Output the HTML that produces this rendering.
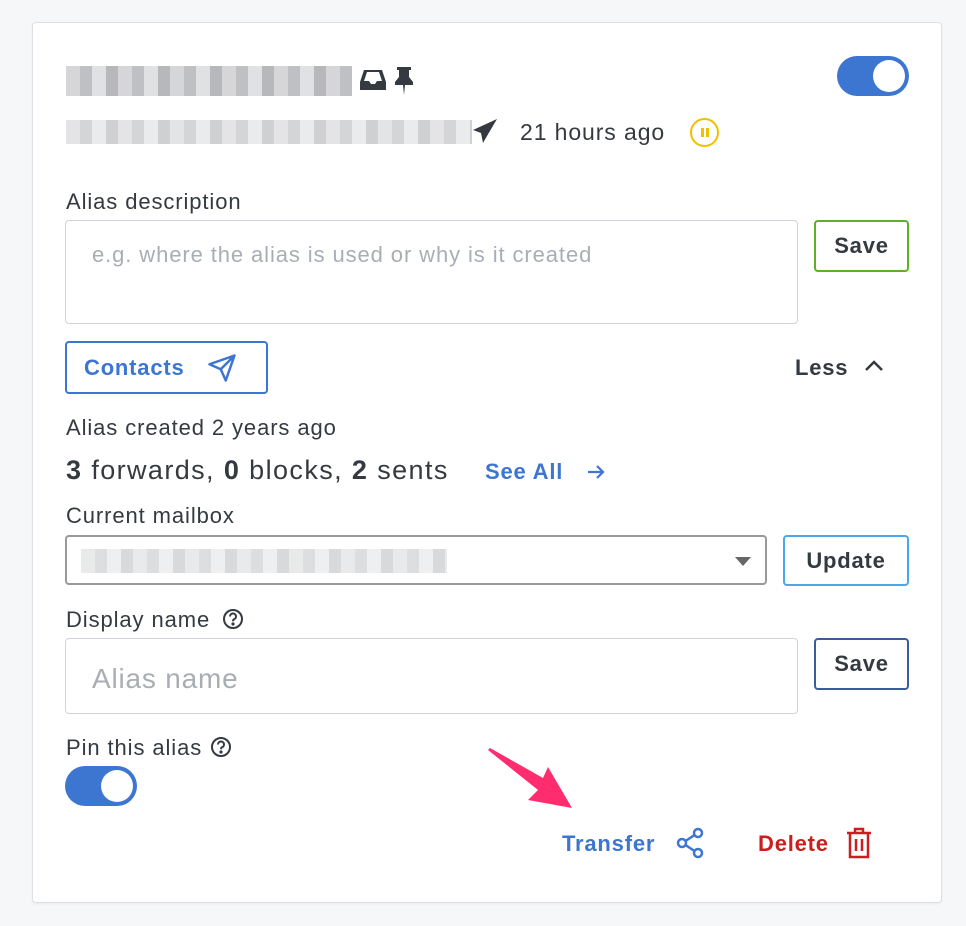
<!DOCTYPE html>
<html><head><meta charset="utf-8"><style>
body{margin:0;width:966px;height:926px;background:#f6f7f9;font-family:"Liberation Sans",sans-serif;position:relative;overflow:hidden}
.card{position:absolute;left:32px;top:22px;width:908px;height:879px;background:#fff;border:1px solid #dcdfe4;border-radius:4px;box-shadow:0 1px 2px rgba(0,0,0,.05)}
.a{position:absolute}
.t{color:#343a40;font-size:22px;letter-spacing:.9px}
.btn{position:absolute;border-radius:4px;font-weight:bold;font-size:22px;display:flex;align-items:center;justify-content:center;box-sizing:border-box;letter-spacing:.8px}
.inp{position:absolute;border:1px solid #ced4da;border-radius:4px;box-sizing:border-box;background:#fff}
.blur{position:absolute;background:repeating-linear-gradient(90deg,#c8c9cc 0 14px,#a9abaf 14px 26px,#d6d7d9 26px 40px,#9fa1a5 40px 52px)}
.tog{position:absolute;width:72px;height:40px;border-radius:20px;background:#3d76d1}
.tog:after{content:"";position:absolute;right:4px;top:4px;width:32px;height:32px;border-radius:50%;background:#fff}
</style></head><body>
<div class="card"></div>
<div class="blur" style="left:66px;top:66px;width:286px;height:30px;opacity:.75"></div>
<svg class="a" style="left:360px;top:68px" width="26" height="24" viewBox="0 0 26 24"><path d="M4 2h18l4 12v8H0v-8z M4 13h5l2 3h4l2-3h5L19 4H7z" fill="#343a40" fill-rule="evenodd"/></svg>
<svg class="a" style="left:393px;top:66px" width="22" height="30" viewBox="0 0 22 30"><path d="M4 1h14v3h-2v7l4 5v3H2v-3l4-5V4H4z M10 19h2l-1 10z" fill="#343a40"/></svg>
<div class="tog" style="left:837px;top:56px"></div>
<div class="blur" style="left:66px;top:120px;width:406px;height:24px;opacity:.5"></div>
<svg class="a" style="left:472px;top:118px" width="26" height="26" viewBox="0 0 26 26"><path d="M25 1L1 12l8 3 2 10 4-7z" fill="#343a40"/></svg>
<div class="a t" style="left:520px;top:119px;font-size:23px">21 hours ago</div>
<div class="a" style="left:690px;top:118px;width:29px;height:29px;border:2.5px solid #f0c000;border-radius:50%;box-sizing:border-box"><div class="a" style="left:9px;top:8px;width:2.5px;height:9px;background:#f0c000"></div><div class="a" style="left:14px;top:8px;width:2.5px;height:9px;background:#f0c000"></div></div>
<div class="a t" style="left:66px;top:189px">Alias description</div>
<div class="inp" style="left:65px;top:220px;width:733px;height:104px"><div class="a" style="left:26px;top:21px;font-size:22px;color:#a9aeb4;letter-spacing:.9px">e.g. where the alias is used or why is it created</div></div>
<div class="btn" style="left:814px;top:220px;width:95px;height:52px;border:2px solid #5cb224;color:#343a40">Save</div>
<div class="btn" style="left:65px;top:341px;width:203px;height:53px;border:2px solid #3d76d1;color:#3d76d1;justify-content:flex-start;padding-left:17px">Contacts
<svg style="margin-left:22px" width="30" height="30" viewBox="0 0 24 24" fill="none" stroke="#3d76d1" stroke-width="2" stroke-linejoin="round"><path d="M22 2L11 13M22 2l-7 20-4-9-9-4z"/></svg></div>
<div class="a t" style="left:795px;top:355px;font-weight:bold;letter-spacing:.8px">Less</div>
<svg class="a" style="left:864px;top:359px" width="20" height="14" viewBox="0 0 20 14"><path d="M2 11l8-8 8 8" fill="none" stroke="#343a40" stroke-width="2.5"/></svg>
<div class="a t" style="left:66px;top:415px">Alias created 2 years ago</div>
<div class="a" style="left:66px;top:455px;font-size:27px;color:#343a40;letter-spacing:1.4px"><b>3</b> forwards, <b>0</b> blocks, <b>2</b> sents</div>
<div class="a" style="left:485px;top:459px;font-size:22px;color:#3d76d1;font-weight:bold;letter-spacing:.8px">See All</div>
<svg class="a" style="left:586px;top:462px" width="20" height="20" viewBox="0 0 20 20" fill="none" stroke="#3d76d1" stroke-width="2.2"><path d="M2 10h15M11 4l6 6-6 6"/></svg>
<div class="a t" style="left:66px;top:503px">Current mailbox</div>
<div class="inp" style="left:65px;top:535px;width:702px;height:50px;border:2px solid #999"><div class="blur" style="left:14px;top:12px;width:366px;height:24px;opacity:.4"></div>
<div class="a" style="left:668px;top:20px;border:8px solid transparent;border-top:9px solid #666"></div></div>
<div class="btn" style="left:783px;top:535px;width:126px;height:51px;border:2px solid #4aa8e8;color:#343a40">Update</div>
<div class="a t" style="left:66px;top:607px">Display name</div>
<svg class="a" style="left:222px;top:608px" width="22" height="22" viewBox="0 0 22 22" fill="none" stroke="#343a40" stroke-width="2"><circle cx="11" cy="11" r="9"/><path d="M8 8.5a3 3 0 1 1 4 2.8c-.8.4-1 1-1 2"/><circle cx="11" cy="16" r=".6" fill="#343a40"/></svg>
<div class="inp" style="left:65px;top:638px;width:733px;height:76px"><div class="a" style="left:26px;top:24px;font-size:28px;color:#a9aeb4;letter-spacing:.8px">Alias name</div></div>
<div class="btn" style="left:814px;top:638px;width:95px;height:52px;border:2px solid #3a5d9c;color:#343a40">Save</div>
<div class="a t" style="left:66px;top:735px">Pin this alias</div>
<svg class="a" style="left:210px;top:736px" width="22" height="22" viewBox="0 0 22 22" fill="none" stroke="#343a40" stroke-width="2"><circle cx="11" cy="11" r="9"/><path d="M8 8.5a3 3 0 1 1 4 2.8c-.8.4-1 1-1 2"/><circle cx="11" cy="16" r=".6" fill="#343a40"/></svg>
<div class="tog" style="left:65px;top:766px"></div>
<svg class="a" style="left:0;top:0" width="966" height="926"><path d="M488 750 L490 748 L543 778 L548 767 L572 808 L528 800 L538 790 Z" fill="#ff2d6f"/></svg>
<div class="a" style="left:562px;top:831px;font-size:22px;color:#3d76d1;font-weight:bold;letter-spacing:.8px">Transfer</div>
<svg class="a" style="left:675px;top:827px" width="30" height="32" viewBox="0 0 30 32" fill="none" stroke="#3d76d1" stroke-width="2.5"><circle cx="23" cy="6" r="4"/><circle cx="7" cy="16" r="4"/><circle cx="23" cy="26" r="4"/><path d="M10.5 14l9-6M10.5 18l9 6"/></svg>
<div class="a" style="left:758px;top:831px;font-size:22px;color:#cc1e1e;font-weight:bold;letter-spacing:.8px">Delete</div>
<svg class="a" style="left:845px;top:827px" width="28" height="32" viewBox="0 0 28 32" fill="none" stroke="#cc1e1e" stroke-width="2.5"><path d="M2 6h24M10 6V2h8v4M5 6v24h18V6M11 12v12M17 12v12"/></svg>
</body></html>
